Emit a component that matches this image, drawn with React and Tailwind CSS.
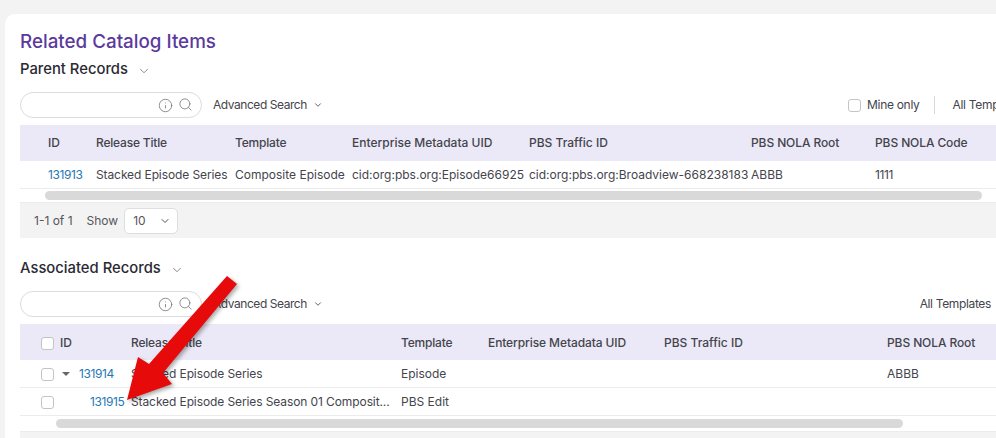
import React from "react";
import { ChevronDown, Search, Info } from "lucide-react";

const Check = ({ className = "" }) => (
  <span className={"block w-[13px] h-[13px] shrink-0 rounded-[3px] border border-[#c4c4c4] bg-white " + className} />
);

function Cell({ w, className = "", children }) {
  return <div className={"shrink-0 whitespace-nowrap overflow-hidden " + className} style={{ width: w }}>{children}</div>;
}

function SectionHead({ title }) {
  return (
    <div className="flex items-center h-[20px]">
      <h2 className="text-[14.8px] font-medium text-[#2a2a33]">{title}</h2>
      <ChevronDown className="ml-[9px] mt-[3px] text-[#6f6f78]" size={14} strokeWidth={1.4} />
    </div>
  );
}

function SearchBox() {
  return (
    <div className="flex items-center">
      <div className="w-[182px] h-[26px] rounded-full border border-[#dcdcdc] flex items-center justify-end pr-[8px] gap-[5px] bg-white">
        <Info size={15} strokeWidth={1.3} className="text-[#777]" />
        <Search size={15} strokeWidth={1.3} className="text-[#777] -mt-[1px]" />
      </div>
      <div className="ml-[11px] flex items-center text-[12px] tracking-[-0.45px] text-[#44444c]">
        Advanced Search
        <ChevronDown className="ml-[6px]" size={10} strokeWidth={2} />
      </div>
    </div>
  );
}

const parentCols = [28, 48, 139, 117, 177, 222, 124, 130];
const assocCols = [111, 270, 87, 176, 223, 110];

export default function App() {
  return (
    <div className="relative w-[996px] h-[438px] overflow-hidden bg-[#f3f3f3] pt-[14px] pl-[5px]" style={{ fontFamily: 'Inter, "Noto Sans", sans-serif' }}>
      <div className="w-[991px] h-[424px] bg-white rounded-tl-[10px] pl-[15px] pt-[17px] overflow-hidden">
        <h1 className="text-[18.8px] leading-[22px] font-medium text-[#5b3a9e]">Related Catalog Items</h1>
        <div className="mt-[6px]"><SectionHead title="Parent Records" /></div>

        <div className="mt-[13px] h-[26px] flex items-center justify-between w-[976px]">
          <SearchBox />
          <div className="flex items-center justify-start text-[12px] text-[#44444c] whitespace-nowrap overflow-hidden w-[148px] shrink-0">
            <Check className="mr-[6px]" />
            <span className="mr-[14px] tracking-[-0.3px] shrink-0">Mine only</span>
            <span className="w-px h-[18px] bg-[#d8d8d8] mr-[18px] shrink-0" />
            <span className="tracking-[-0.3px] shrink-0">All Templates</span>
          </div>
        </div>

        <div className="mt-[7px] w-[976px] text-[12px]">
          <div className="h-[36px] bg-[#ebe9f7] flex items-center font-medium text-[#44444c]">
            <Cell w={parentCols[0]} />
            <Cell w={parentCols[1]}>ID</Cell>
            <Cell w={parentCols[2]} className="tracking-[-0.2px]">Release Title</Cell>
            <Cell w={parentCols[3]} className="tracking-[-0.2px]">Template</Cell>
            <Cell w={parentCols[4]}>Enterprise Metadata UID</Cell>
            <Cell w={parentCols[5]}>PBS Traffic ID</Cell>
            <Cell w={parentCols[6]} className="tracking-[-0.1px]">PBS NOLA Root</Cell>
            <Cell w={parentCols[7]} className="tracking-[-0.1px]">PBS NOLA Code</Cell>
          </div>
          <div className="h-[28px] flex items-center border-b border-[#ececec] text-[#44444c]">
            <Cell w={parentCols[0]} />
            <Cell w={parentCols[1]} className="text-[#1f78b4] tracking-[-0.4px]">131913</Cell>
            <Cell w={parentCols[2]} className="tracking-[-0.1px]">Stacked Episode Series</Cell>
            <Cell w={parentCols[3]}>Composite Episode</Cell>
            <Cell w={parentCols[4]}>cid:org:pbs.org:Episode66925</Cell>
            <Cell w={parentCols[5]}>cid:org:pbs.org:Broadview-668238183</Cell>
            <Cell w={parentCols[6]}>ABBB</Cell>
            <Cell w={parentCols[7]} className="tracking-[-0.4px]">1111</Cell>
          </div>
          <div className="h-[14px] flex items-center pl-[25px] border-b border-[#ececec]">
            <div className="w-[937px] h-[9px] rounded-full bg-[#d9d9d9]" />
          </div>
          <div className="h-[35px] bg-[#f3f3f3] flex items-center pl-[14px] text-[#55555c]">
            <span>1-1 of 1</span>
            <span className="ml-[14px]">Show</span>
            <div className="ml-[6px] w-[54px] h-[26px] bg-white rounded-[5px] border border-[#dedede] flex items-center justify-between pl-[8px] pr-[6px]">
              <span>10</span>
              <ChevronDown size={12} strokeWidth={2} />
            </div>
          </div>
        </div>

        <div className="mt-[20px]"><SectionHead title="Associated Records" /></div>

        <div className="mt-[13px] h-[26px] flex items-center justify-between w-[976px]">
          <SearchBox />
          <span className="text-[12px] text-[#44444c] mr-[5px] tracking-[-0.35px]">All Templates</span>
        </div>

        <div className="mt-[7px] w-[976px] text-[12px]">
          <div className="h-[36px] pt-[2px] bg-[#ebe9f7] flex items-center font-medium text-[#44444c]">
            <Cell w={assocCols[0]} className="flex items-center pl-[21px]"><Check className="mr-[6px]" />ID</Cell>
            <Cell w={assocCols[1]} className="tracking-[-0.2px]">Release Title</Cell>
            <Cell w={assocCols[2]} className="tracking-[-0.2px]">Template</Cell>
            <Cell w={assocCols[3]} className="tracking-[-0.1px]">Enterprise Metadata UID</Cell>
            <Cell w={assocCols[4]}>PBS Traffic ID</Cell>
            <Cell w={assocCols[5]} className="tracking-[-0.1px]">PBS NOLA Root</Cell>
          </div>
          <div className="h-[28px] pt-[1px] flex items-center border-b border-[#ececec] text-[#44444c]">
            <Cell w={assocCols[0]} className="flex items-center pl-[21px]">
              <Check className="mr-[8px]" />
              <span className="w-0 h-0 border-x-[4px] border-x-transparent border-t-[4px] border-t-[#666] mr-[9px]" />
              <span className="text-[#1f78b4] tracking-[-0.4px]">131914</span>
            </Cell>
            <Cell w={assocCols[1]} className="tracking-[-0.1px]">Stacked Episode Series</Cell>
            <Cell w={assocCols[2]}>Episode</Cell>
            <Cell w={assocCols[3]} />
            <Cell w={assocCols[4]} />
            <Cell w={assocCols[5]}>ABBB</Cell>
          </div>
          <div className="h-[28px] pt-[1px] flex items-center border-b border-[#ececec] text-[#44444c]">
            <Cell w={assocCols[0]} className="flex items-center pl-[21px]">
              <Check className="mr-[36px]" />
              <span className="text-[#1f78b4] tracking-[-0.4px]">131915</span>
            </Cell>
            <Cell w={assocCols[1]} className="tracking-[-0.1px]">Stacked Episode Series Season 01 Composit...</Cell>
            <Cell w={assocCols[2]}>PBS Edit</Cell>
          </div>
          <div className="h-[16px] flex items-center pl-[36px] border-b border-[#ececec]">
            <div className="w-[847px] h-[9px] rounded-full bg-[#d9d9d9]" />
          </div>
          <div className="h-[10px] bg-[#f3f3f3]" />
        </div>
      </div>

      <svg className="absolute left-0 top-0 pointer-events-none" width="996" height="438" viewBox="0 0 996 438" style={{ filter: "drop-shadow(2px 2px 2px rgba(0,0,0,0.35))" }}>
        <polygon points="227,276 237,284 163,373 172,384 127,400 138,357 149,364" fill="#e60a0a" />
      </svg>
    </div>
  );
}
